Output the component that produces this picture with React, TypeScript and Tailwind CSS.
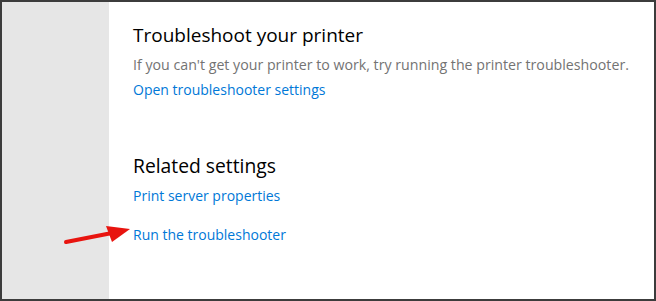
import React from "react";

export default function App() {
  const font = { fontFamily: '"Open Sans", "Noto Sans", sans-serif' };
  return (
    <div className="relative w-[656px] h-[301px] border-2 border-[#3c3c3c] bg-white flex overflow-hidden" style={font}>
      <div className="w-[107px] shrink-0 bg-[#e6e6e6]" />
      <div className="flex flex-col pl-[24px] pt-[19px]">
        <h1 className="text-[19px] leading-[28px] text-black">Troubleshoot your printer</h1>
        <p className="mt-[6px] text-[14.2px] leading-[20px] text-[#737373]">
          If you can't get your printer to work, try running the printer troubleshooter.
        </p>
        <a className="mt-[5px] text-[14px] leading-[20px] text-[#0078d7]">Open troubleshooter settings</a>
        <h2 className="mt-[52px] text-[19.3px] leading-[28px] text-black">Related settings</h2>
        <a className="mt-[6px] text-[14px] leading-[20px] text-[#0078d7]">Print server properties</a>
        <a className="mt-[19px] text-[14px] leading-[20px] text-[#0078d7]">Run the troubleshooter</a>
      </div>
      <svg className="absolute left-[60px] top-[222px]" width="72" height="24" viewBox="0 0 72 24">
        <line x1="4" y1="18" x2="50" y2="9" stroke="#e8140f" strokeWidth="4" strokeLinecap="round" />
        <polygon points="68,5 44,2 50,18" fill="#e8140f" />
      </svg>
    </div>
  );
}
